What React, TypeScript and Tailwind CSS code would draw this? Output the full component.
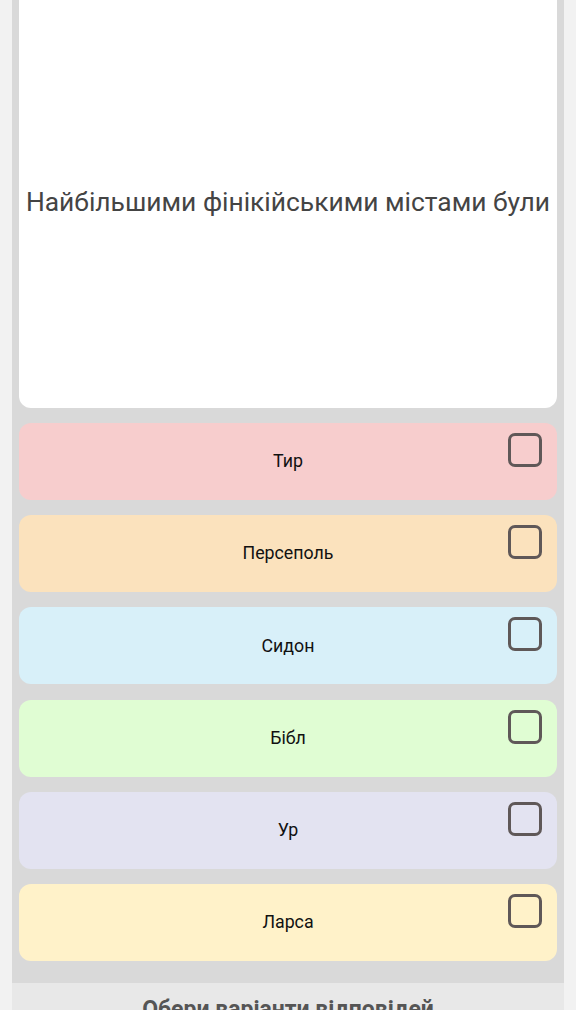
import React from "react";

const options = [
  { label: "Тир", bg: "bg-[#f7cdcd]" },
  { label: "Персеполь", bg: "bg-[#fbe2bd]" },
  { label: "Сидон", bg: "bg-[#d8f0f9]" },
  { label: "Бібл", bg: "bg-[#e0fdd3]" },
  { label: "Ур", bg: "bg-[#e3e3f1]" },
  { label: "Ларса", bg: "bg-[#fff2c9]" },
];

const App = () => {
  return (
    <div className="h-[1010px] overflow-hidden bg-[#f2f2f2] px-[12px] font-['Roboto',sans-serif]">
      <div className="bg-[#d9d9d9] -mt-[20px]">
        <div className="px-[7px] pb-[22px]">
          <div className="flex h-[428px] items-center justify-center rounded-[12px] bg-white pt-[16px]">
            <p className="text-[26.4px] text-[#444] leading-none whitespace-nowrap">Найбільшими фінікійськими містами були</p>
          </div>
          <div className="mt-[15px] flex flex-col gap-[15.2px]">
            {options.map((o) => (
              <div key={o.label} className={`relative flex h-[77px] items-center justify-center rounded-[12px] ${o.bg}`}>
                <span className="text-[17.8px] text-[#111]">{o.label}</span>
                <div className="absolute right-[15px] top-[10px] h-[34px] w-[34px] rounded-[7px] border-[3px] border-[#5f5858]" />
              </div>
            ))}
          </div>
        </div>
        <div className="h-[40px] bg-[#e8e8e8] pt-[10px] text-center">
          <span className="text-[23px] font-bold text-[#555]">Обери варіанти відповідей</span>
        </div>
      </div>
    </div>
  );
};

export default App;
